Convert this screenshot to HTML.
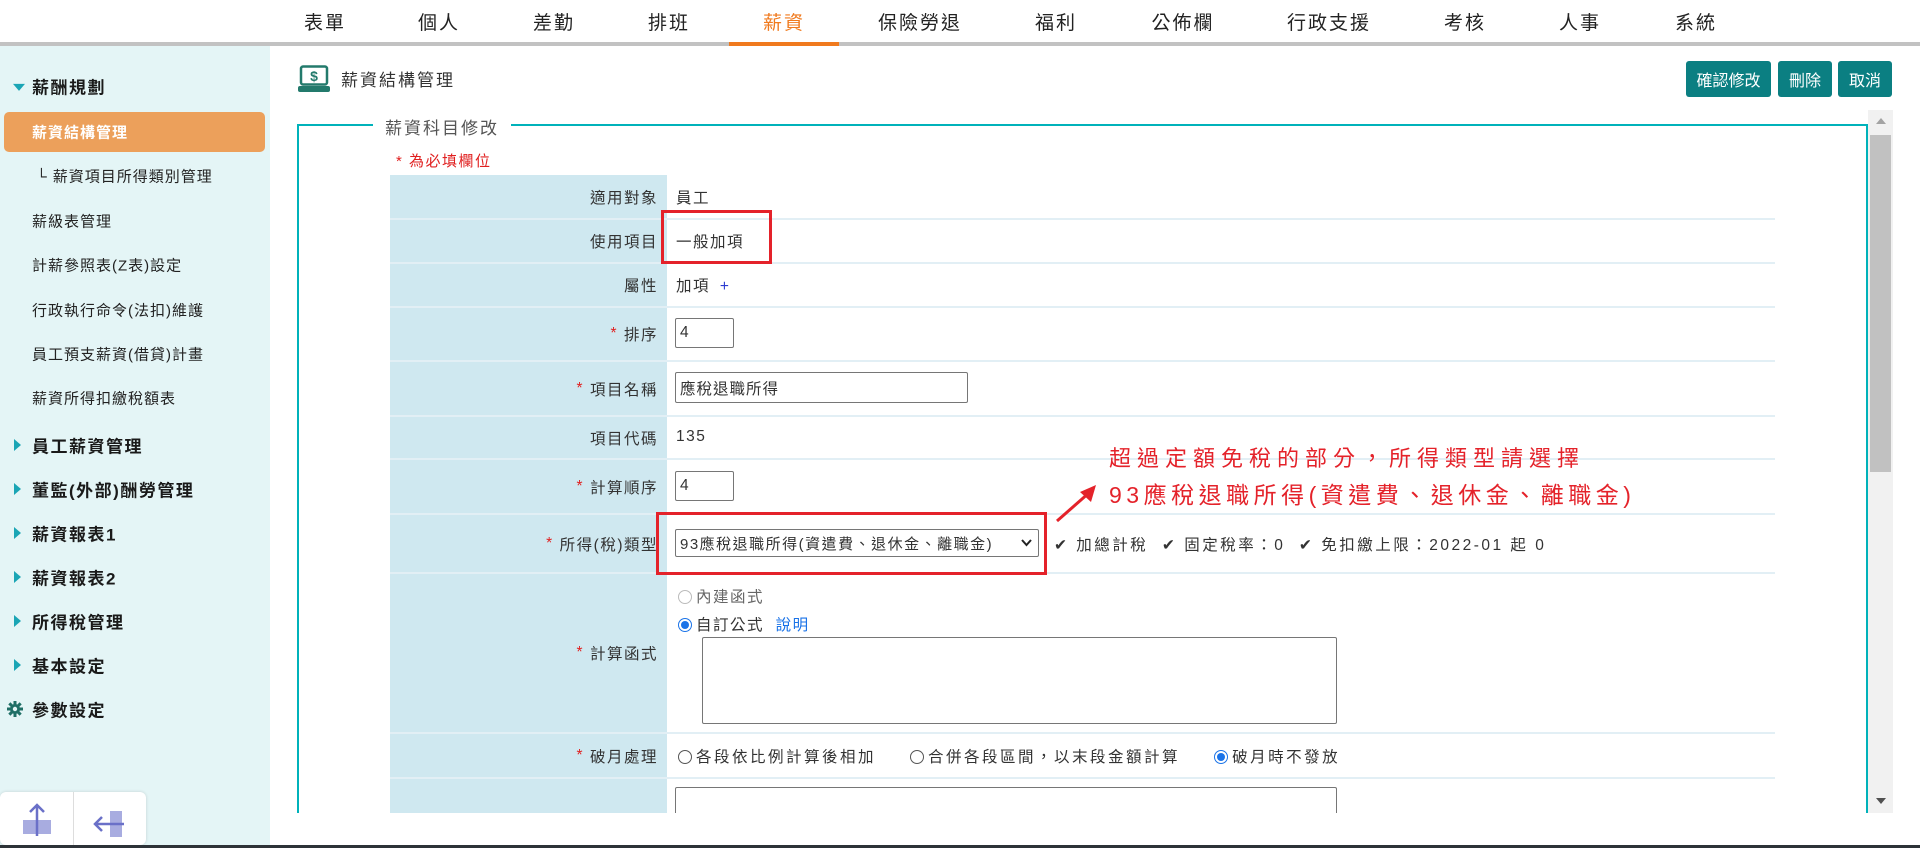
<!DOCTYPE html>
<html><head><meta charset="utf-8">
<style>
*{box-sizing:border-box;margin:0;padding:0}
body{width:1920px;height:848px;position:relative;overflow:hidden;background:#fff;font-family:"Liberation Sans","Noto Sans CJK TC",sans-serif;color:#333}
.a{position:absolute;white-space:nowrap}
.nav{font-size:19px;color:#222;top:8px;letter-spacing:2px;transform:translateX(-50%)}
.sb{left:32px;font-size:15px;color:#222;letter-spacing:1px;transform:translateY(-50%)}
.sbh{left:32px;font-size:17px;font-weight:bold;color:#1a1a1a;letter-spacing:1.5px;transform:translateY(-50%)}
.tri{position:absolute;left:14px;width:0;height:0;border-top:6px solid transparent;border-bottom:6px solid transparent;border-left:7px solid #1aa5b5;transform:translateY(-50%)}
.lbl{position:absolute;left:390px;width:277px;background:#cfe8f0;text-align:right;padding-right:9px;font-size:15.5px;color:#333;letter-spacing:1.5px;display:flex;align-items:center;justify-content:flex-end}
.sep{position:absolute;left:390px;width:1385px;height:2px;background:#e2eff5}
.val{font-size:15.5px;color:#333;letter-spacing:1.5px;transform:translateY(-50%)}
.req{color:#e02020;margin-right:6px}
.inp{position:absolute;border:1px solid #767676;border-radius:2px;background:#fff;font-size:15.5px;padding-left:4px;display:flex;align-items:center}
.btn{position:absolute;top:61px;height:36px;background:#0b7f82;color:#fff;font-size:16px;border-radius:3px;display:flex;align-items:center;justify-content:center}
.rad{display:inline-block;width:14px;height:14px;border:1px solid #555;border-radius:50%;vertical-align:-2px;margin-right:4px;position:relative}
</style></head><body>
<div class="a nav" style="left:325px">表單</div>
<div class="a nav" style="left:439px">個人</div>
<div class="a nav" style="left:554px">差勤</div>
<div class="a nav" style="left:669px">排班</div>
<div class="a nav" style="left:784px;color:#f07a1e">薪資</div>
<div class="a nav" style="left:920px">保險勞退</div>
<div class="a nav" style="left:1056px">福利</div>
<div class="a nav" style="left:1183px">公佈欄</div>
<div class="a nav" style="left:1329px">行政支援</div>
<div class="a nav" style="left:1465px">考核</div>
<div class="a nav" style="left:1580px">人事</div>
<div class="a nav" style="left:1696px">系統</div>
<div class="a" style="left:0;top:42px;width:1920px;height:4px;background:#c2c2c2"></div>
<div class="a" style="left:729px;top:42px;width:110px;height:4px;background:#f07a1e"></div>

<div class="a" style="left:0;top:46px;width:270px;height:799px;background:#e4f5f6"></div>
<div class="tri" style="top:86px;border-left:6px solid transparent;border-right:6px solid transparent;border-top:7px solid #1aa5b5;border-bottom:0;left:13px;transform:translateY(-30%)"></div>
<div class="a sbh" style="top:86px">薪酬規劃</div>
<div class="a" style="left:4px;top:112px;width:261px;height:40px;background:#eca05b;border-radius:5px"></div>
<div class="a sb" style="top:132px;color:#fff;font-weight:bold">薪資結構管理</div>
<div class="a sb" style="top:176px;left:36px">└ 薪資項目所得類別管理</div>
<div class="a sb" style="top:221px">薪級表管理</div>
<div class="a sb" style="top:265px">計薪參照表(Z表)設定</div>
<div class="a sb" style="top:310px">行政執行命令(法扣)維護</div>
<div class="a sb" style="top:354px">員工預支薪資(借貸)計畫</div>
<div class="a sb" style="top:398px">薪資所得扣繳稅額表</div>
<div class="tri" style="top:445px"></div><div class="a sbh" style="top:445px">員工薪資管理</div>
<div class="tri" style="top:489px"></div><div class="a sbh" style="top:489px">董監(外部)酬勞管理</div>
<div class="tri" style="top:533px"></div><div class="a sbh" style="top:533px">薪資報表1</div>
<div class="tri" style="top:577px"></div><div class="a sbh" style="top:577px">薪資報表2</div>
<div class="tri" style="top:621px"></div><div class="a sbh" style="top:621px">所得稅管理</div>
<div class="tri" style="top:665px"></div><div class="a sbh" style="top:665px">基本設定</div>
<svg class="a" style="left:7px;top:701px" width="16" height="16" viewBox="0 0 16 16"><g fill="#1f6f66"><circle cx="8" cy="8" r="5"/><rect x="6.5" y="0" width="3" height="16"/><rect x="0" y="6.5" width="16" height="3"/><rect x="6.5" y="0" width="3" height="16" transform="rotate(45 8 8)"/><rect x="6.5" y="0" width="3" height="16" transform="rotate(-45 8 8)"/></g><circle cx="8" cy="8" r="2.2" fill="#e4f5f6"/></svg>
<div class="a sbh" style="top:709px">參數設定</div>
<div class="a" style="left:0;top:792px;width:146px;height:53px;background:#fff;border-radius:6px;box-shadow:0 0 3px rgba(0,0,0,.15)"></div>
<div class="a" style="left:73px;top:792px;width:1px;height:53px;background:#ddd"></div>
<svg class="a" style="left:20px;top:800px" width="34" height="40" viewBox="0 0 34 40"><rect x="3" y="20" width="28" height="14" fill="#a8ace0"/><path d="M17 36V5M10 12l7-7 7 7" stroke="#6a70c8" stroke-width="2.5" fill="none"/></svg>
<svg class="a" style="left:90px;top:800px" width="40" height="40" viewBox="0 0 40 40"><rect x="20" y="11" width="12" height="26" fill="#a8ace0"/><path d="M34 24H6M12 17l-7 7 7 7" stroke="#6a70c8" stroke-width="2.5" fill="none"/></svg>
<div class="a" style="left:0;top:845px;width:1920px;height:3px;background:#2d3338"></div>

<svg class="a" style="left:298px;top:65px" width="32" height="28" viewBox="0 0 32 28"><rect x="3" y="1.5" width="26" height="18" rx="2" fill="none" stroke="#237a6c" stroke-width="2.5"/><text x="16" y="16" font-size="14" font-weight="bold" fill="#237a6c" text-anchor="middle" font-family="Liberation Sans">$</text><rect x="0" y="21" width="32" height="6" rx="2" fill="#237a6c"/></svg>
<div class="a" style="left:341px;top:66px;font-size:17px;color:#333;letter-spacing:2px">薪資結構管理</div>
<div class="btn" style="left:1686px;width:85px">確認修改</div>
<div class="btn" style="left:1778px;width:54px">刪除</div>
<div class="btn" style="left:1838px;width:54px">取消</div>

<div class="a" style="left:297px;top:124px;width:1571px;height:690px;border:2px solid #00b2ba;border-bottom:none"></div>
<div class="a" style="left:373px;top:114px;background:#fff;padding:0 12px;font-size:17px;color:#555;letter-spacing:2px">薪資科目修改</div>
<div class="a" style="left:1868px;top:110px;width:25px;height:703px;background:#f1f1f1"></div>
<div class="a" style="left:1870px;top:135px;width:21px;height:337px;background:#c1c1c1"></div>
<div class="a" style="left:1876px;top:118px;border-left:5px solid transparent;border-right:5px solid transparent;border-bottom:6px solid #a3a3a3"></div>
<div class="a" style="left:1876px;top:798px;border-left:5px solid transparent;border-right:5px solid transparent;border-top:6px solid #505050"></div>
<div class="a" style="left:396px;top:150px;font-size:15px;color:#e02020;letter-spacing:1.5px">* 為必填欄位</div>

<div class="lbl" style="top:175px;height:43px">適用對象</div>
<div class="sep" style="top:218px"></div>
<div class="lbl" style="top:220px;height:42px">使用項目</div>
<div class="sep" style="top:262px"></div>
<div class="lbl" style="top:264px;height:42px">屬性</div>
<div class="sep" style="top:306px"></div>
<div class="lbl" style="top:308px;height:52px"><span class="req">*</span>排序</div>
<div class="sep" style="top:360px"></div>
<div class="lbl" style="top:362px;height:53px"><span class="req">*</span>項目名稱</div>
<div class="sep" style="top:415px"></div>
<div class="lbl" style="top:417px;height:41px">項目代碼</div>
<div class="sep" style="top:458px"></div>
<div class="lbl" style="top:460px;height:53px"><span class="req">*</span>計算順序</div>
<div class="sep" style="top:513px"></div>
<div class="lbl" style="top:515px;height:57px"><span class="req">*</span>所得(稅)類型</div>
<div class="sep" style="top:572px"></div>
<div class="lbl" style="top:574px;height:158px"><span class="req">*</span>計算函式</div>
<div class="sep" style="top:732px"></div>
<div class="lbl" style="top:734px;height:43px"><span class="req">*</span>破月處理</div>
<div class="sep" style="top:777px"></div>
<div class="lbl" style="top:779px;height:34px"></div>

<div class="a val" style="left:676px;top:197px">員工</div>
<div class="a val" style="left:676px;top:241px">一般加項</div>
<div class="a" style="left:661px;top:210px;width:111px;height:54px;border:3px solid #e4222a"></div>
<div class="a val" style="left:676px;top:285px">加項 <span style="color:#2b3bd0;margin-left:4px">+</span></div>
<div class="inp" style="left:675px;top:318px;width:59px;height:30px">4</div>
<div class="inp" style="left:675px;top:372px;width:293px;height:31px;letter-spacing:1px">應稅退職所得</div>
<div class="a val" style="left:676px;top:437px">135</div>
<div class="inp" style="left:675px;top:471px;width:59px;height:30px">4</div>
<div class="inp" style="left:675px;top:529px;width:364px;height:28px;font-size:15px;letter-spacing:1.5px">93應稅退職所得(資遣費、退休金、離職金)
<svg style="position:absolute;right:6px;top:9px" width="11" height="8" viewBox="0 0 11 8"><path d="M1 1l4.5 5L10 1" stroke="#222" stroke-width="2" fill="none"/></svg></div>
<div class="a" style="left:656px;top:512px;width:391px;height:63px;border:3px solid #e4222a"></div>
<div class="a val" style="left:1054px;top:544px;letter-spacing:2.5px">✔ 加總計稅 &nbsp;✔ 固定稅率：0 &nbsp;✔ 免扣繳上限：2022-01 起 0</div>

<div class="a" style="left:1109px;top:441px;font-size:22px;color:#e4222a;letter-spacing:6px">超過定額免稅的部分，所得類型請選擇</div>
<div class="a" style="left:1109px;top:476px;font-size:23px;color:#e4222a;letter-spacing:4.5px">93應稅退職所得(資遣費、退休金、離職金)</div>
<svg class="a" style="left:1052px;top:480px" width="50" height="46" viewBox="0 0 50 46"><path d="M5 41L38 12" stroke="#e4222a" stroke-width="3"/><path d="M44 5L28 12L39 22Z" fill="#e4222a"/></svg>

<div class="a val" style="left:678px;top:596px;color:#666"><span class="rad" style="border-color:#bbb"></span>內建函式</div>
<div class="a val" style="left:678px;top:624px"><span class="rad" style="border:1.5px solid #1a73e8"><span style="position:absolute;left:2px;top:2px;width:8px;height:8px;border-radius:50%;background:#1a73e8"></span></span>自訂公式 &nbsp;<span style="color:#1a73e8">說明</span></div>
<div class="inp" style="left:702px;top:637px;width:635px;height:87px"></div>
<div class="a val" style="left:678px;top:756px;letter-spacing:2.5px"><span class="rad"></span>各段依比例計算後相加 &nbsp; &nbsp; <span class="rad"></span>合併各段區間，以末段金額計算 &nbsp; &nbsp; <span class="rad" style="border:1.5px solid #1a73e8"><span style="position:absolute;left:2px;top:2px;width:8px;height:8px;border-radius:50%;background:#1a73e8"></span></span>破月時不發放</div>
<div class="inp" style="left:675px;top:787px;width:662px;height:40px;border-bottom:none"></div>
<div class="a" style="left:270px;top:813px;width:1650px;height:32px;background:#fff"></div>
</body></html>
